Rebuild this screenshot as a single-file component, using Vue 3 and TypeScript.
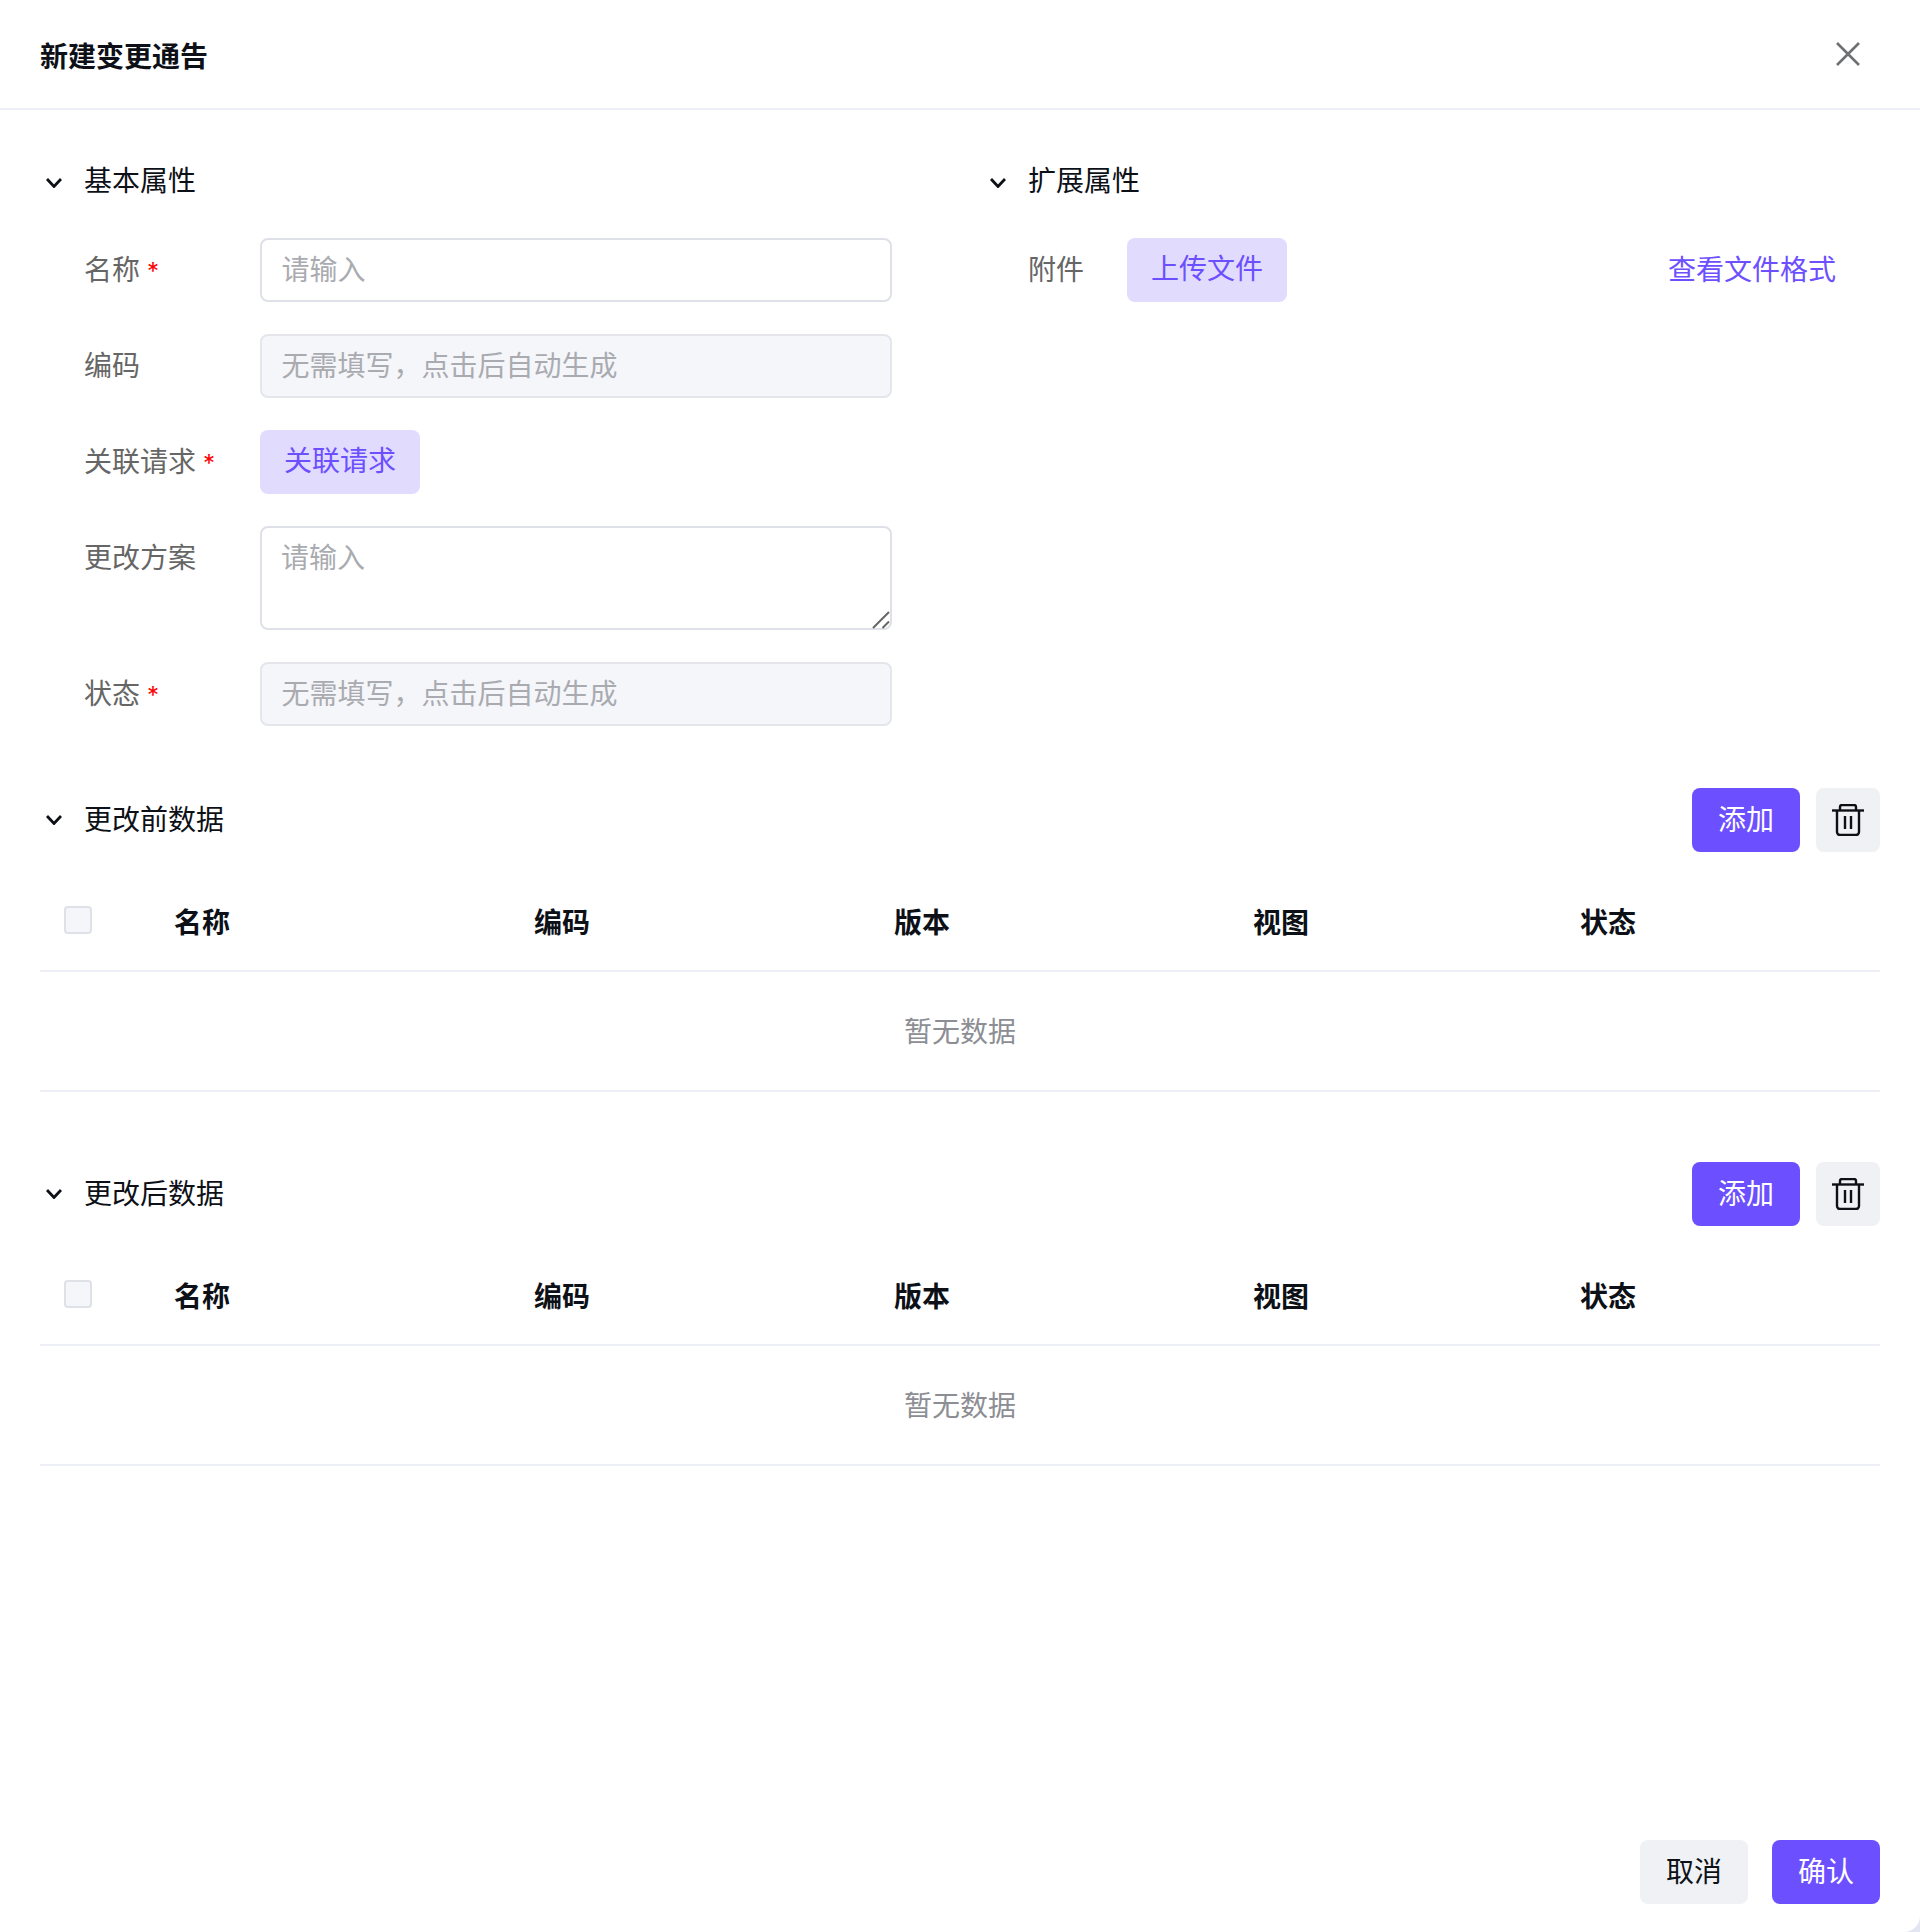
<script setup lang="ts">
const columns: string[] = ['名称', '编码', '版本', '视图', '状态']
const tables: { title: string }[] = [{ title: '更改前数据' }, { title: '更改后数据' }]
</script>

<template>
  <div class="dialog">
    <header class="head">
      <h1 class="title">新建变更通告</h1>
      <button class="close" aria-label="关闭">
        <svg width="24" height="24" viewBox="0 0 24 24" fill="none" stroke="#6f7074" stroke-width="2.6">
          <path d="M1 1 23 23M23 1 1 23" />
        </svg>
      </button>
    </header>

    <main class="body">
      <div class="columns">
        <section class="col-left">
          <div class="sec-title">
            <svg class="chev" width="16" height="10" viewBox="0 0 16 10" fill="none" stroke="#0d1117" stroke-width="2.8">
              <path d="M1 1 8 8.5 15 1" />
            </svg>
            <span>基本属性</span>
          </div>
          <div class="form">
            <div class="row">
              <label class="lab">名称<i class="req">*</i></label>
              <input class="ctl" placeholder="请输入" />
            </div>
            <div class="row">
              <label class="lab">编码</label>
              <input class="ctl off" disabled placeholder="无需填写，点击后自动生成" />
            </div>
            <div class="row">
              <label class="lab">关联请求<i class="req">*</i></label>
              <button class="btn soft">关联请求</button>
            </div>
            <div class="row top">
              <label class="lab">更改方案</label>
              <div class="area-wrap">
                <textarea class="ctl area" placeholder="请输入"></textarea>
                <svg class="grip" width="18" height="18" viewBox="0 0 18 18" fill="none" stroke="#666" stroke-width="2">
                  <path d="M1 17 17 1M10.5 17 17 10.5" />
                </svg>
              </div>
            </div>
            <div class="row">
              <label class="lab">状态<i class="req">*</i></label>
              <input class="ctl off" disabled placeholder="无需填写，点击后自动生成" />
            </div>
          </div>
        </section>
        <section class="col-right">
          <div class="sec-title">
            <svg class="chev" width="16" height="10" viewBox="0 0 16 10" fill="none" stroke="#0d1117" stroke-width="2.8">
              <path d="M1 1 8 8.5 15 1" />
            </svg>
            <span>扩展属性</span>
          </div>
          <div class="attach">
            <span class="attach-lab">附件</span>
            <button class="btn soft">上传文件</button>
            <a class="link">查看文件格式</a>
          </div>
        </section>
      </div>

      <section v-for="t in tables" :key="t.title" class="block">
        <div class="block-head">
          <div class="sec-title">
            <svg class="chev chev-block" width="16" height="10" viewBox="0 0 16 10" fill="none" stroke="#0d1117" stroke-width="2.8">
              <path d="M1 1 8 8.5 15 1" />
            </svg>
            <span>{{ t.title }}</span>
          </div>
          <div class="actions">
            <button class="btn primary">添加</button>
            <button class="btn icon" aria-label="删除">
              <svg width="32" height="32" viewBox="0 0 32 32" fill="none" stroke="#0d1117" stroke-width="2.4">
                <path d="M0 6.5H32" />
                <path d="M8 6V3a2 2 0 0 1 2-2h12a2 2 0 0 1 2 2v3" />
                <path d="M5 7V28a3 3 0 0 0 3 3H24a3 3 0 0 0 3-3V7" />
                <path d="M13 12V25M19 12V25" />
              </svg>
            </button>
          </div>
        </div>
        <div class="thead">
          <div class="check-cell"><span class="check"></span></div>
          <div v-for="c in columns" :key="c" class="th">{{ c }}</div>
        </div>
        <div class="empty">暂无数据</div>
      </section>
    </main>

    <footer class="foot">
      <button class="btn plain">取消</button>
      <button class="btn primary">确认</button>
    </footer>
  </div>
</template>

<style>
html,
body {
  margin: 0;
  background: #e3e5f2;
}
</style>

<style scoped>
.dialog {
  box-sizing: border-box;
  width: 1920px;
  height: 1932px;
  display: flex;
  flex-direction: column;
  background: #fff;
  border-radius: 0 0 16px 0;
  color: #0d1117;
  font-family: Inter, "Noto Sans CJK SC", sans-serif;
  font-size: 28px;
  line-height: 40px;
}
.head {
  box-sizing: border-box;
  height: 110px;
  padding: 0 60px 0 40px;
  display: flex;
  align-items: center;
  justify-content: space-between;
  border-bottom: 2px solid #eceff5;
}
.title {
  margin: 6px 0 0;
  font-size: 28px;
  font-weight: 700;
}
.close {
  display: flex;
  padding: 0;
  border: 0;
  background: none;
}
.body {
  flex: 1;
  padding: 50px 40px 0;
}
.columns {
  display: grid;
  grid-template-columns: 944px 1fr;
}
.sec-title {
  display: flex;
  align-items: center;
  height: 42px;
  gap: 22px;
}
.chev {
  margin-left: 6px;
  margin-top: 3px;
}
.chev-block {
  margin-top: 0;
}
.form {
  margin-top: 36px;
  display: flex;
  flex-direction: column;
  gap: 32px;
}
.row {
  display: flex;
  align-items: center;
  padding-left: 44px;
}
.row.top {
  align-items: flex-start;
}
.row.top .lab {
  padding-top: 12px;
}
.lab {
  width: 176px;
  flex: none;
  color: #666;
}
.req {
  margin-left: 7px;
  color: #f00;
  font-style: normal;
  font-size: 24px;
  line-height: 1;
}
.ctl {
  box-sizing: border-box;
  width: 632px;
  height: 64px;
  padding: 0 19.5px;
  border: 2px solid #dfe1e8;
  border-radius: 8px;
  background: #fff;
  font: inherit;
  outline: none;
}
.ctl::placeholder {
  color: #a9abb0;
  opacity: 1;
}
.ctl.off {
  border-color: #e4e6ec;
  background: #f5f6fa;
}
.area-wrap {
  position: relative;
  width: 632px;
  height: 104px;
}
.area {
  display: block;
  height: 104px;
  padding: 10px 19px;
  resize: none;
}
.grip {
  position: absolute;
  right: 2px;
  bottom: 1px;
}
.btn {
  box-sizing: border-box;
  height: 64px;
  padding: 0;
  border: 0;
  border-radius: 8px;
  font: inherit;
}
.soft {
  width: 160px;
  padding-bottom: 2px;
  background: #e1dbfe;
  color: #6c4fff;
}
.attach {
  margin-top: 36px;
  height: 64px;
  display: flex;
  align-items: center;
  padding: 0 44px;
}
.attach-lab {
  width: 99px;
  flex: none;
  color: #666;
}
.link {
  margin-left: auto;
  color: #6c4fff;
}
.block {
  margin-top: 70px;
}
.columns + .block {
  margin-top: 62px;
}
.block-head {
  display: flex;
  justify-content: space-between;
  align-items: center;
  height: 64px;
}
.actions {
  display: flex;
  gap: 16px;
}
.primary {
  width: 108px;
  background: #6c4fff;
  color: #fff;
}
.plain {
  width: 108px;
  background: #f0f1f5;
  color: #0d1117;
}
.icon {
  width: 64px;
  background: #f0f1f5;
  display: flex;
  align-items: center;
  justify-content: center;
}
.thead {
  box-sizing: border-box;
  margin-top: 24px;
  height: 96px;
  display: grid;
  grid-template-columns: 134px 360px 360px 359px 327px 1fr;
  align-items: center;
  border-bottom: 2px solid #eceff5;
  font-weight: 700;
}
.check-cell {
  padding-left: 24px;
  display: flex;
  margin-top: -7px;
}
.check {
  box-sizing: border-box;
  width: 28px;
  height: 28px;
  border: 2px solid #dfe1e8;
  border-radius: 4px;
  background: #f5f6fa;
}
.empty {
  box-sizing: border-box;
  height: 120px;
  padding-top: 2px;
  display: flex;
  align-items: center;
  justify-content: center;
  border-bottom: 2px solid #eceff5;
  color: #8c8e94;
}
.foot {
  padding: 0 40px 28px;
  display: flex;
  justify-content: flex-end;
  gap: 24px;
}
</style>
